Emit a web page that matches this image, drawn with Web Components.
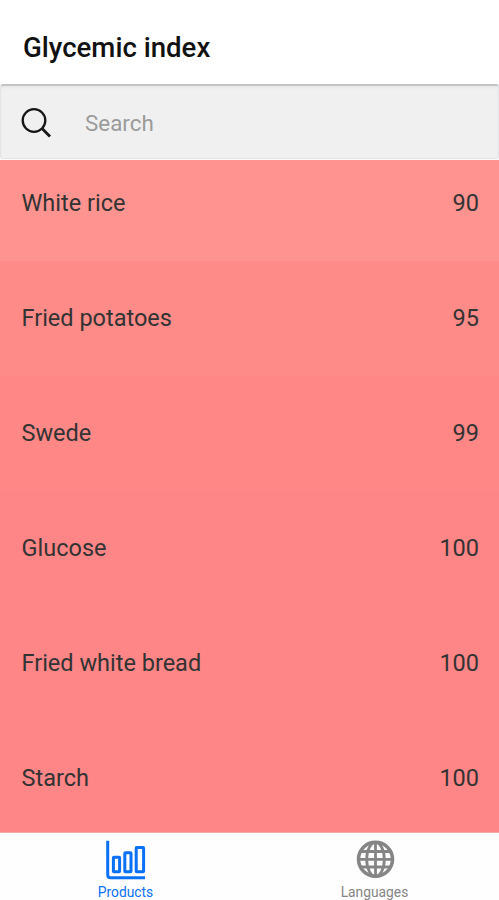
<!DOCTYPE html>
<html lang="en">
<head>
<meta charset="utf-8">
<title>Glycemic index</title>
<style>
  body {
    margin: 0;
    font-family: Roboto, sans-serif;
    background: #fff;
  }
</style>
</head>
<body>
<gi-app></gi-app>

<script>
class GiHeader extends HTMLElement {
  constructor() {
    super();
    this.attachShadow({ mode: "open" });
    this.shadowRoot.innerHTML = `
      <style>
        :host {
          display: flex;
          align-items: center;
          flex: none;
          height: 84px;
          padding: 12px 23px 0;
          box-sizing: border-box;
          background: #fff;
        }
        h1 {
          margin: 0;
          font-size: 27.6px;
          line-height: 32px;
          font-weight: 500;
          color: #111;
        }
      </style>
      <h1><slot></slot></h1>
    `;
  }
}
window.customElements.define("gi-header", GiHeader);

class GiSearch extends HTMLElement {
  constructor() {
    super();
    this.attachShadow({ mode: "open" });
    this.shadowRoot.innerHTML = `
      <style>
        :host {
          display: block;
          flex: none;
          height: 76px;
          background: #fbfbfb;
        }
        .field {
          display: flex;
          align-items: center;
          height: 75px;
          box-sizing: border-box;
          padding: 2px 20px 0;
          border: 1px solid #e2e6e8;
          border-top: 2px solid #c4c4c4;
          border-radius: 3px;
          background: #f0f0f0;
          box-shadow: inset 0 2px 2px #e8e8e8;
        }
        svg {
          display: block;
          width: 32px;
          height: 32px;
          margin-right: 32px;
        }
        span {
          font-size: 22.4px;
          line-height: 30px;
          color: #9b9b9b;
        }
      </style>
      <div class="field">
        <svg viewBox="0 0 32 32" fill="none" stroke="#161616" stroke-width="2.3">
          <circle cx="13" cy="13.5" r="11.3"></circle>
          <path d="M20.8 21.3 29 29.5" stroke-width="2.8"></path>
        </svg>
        <span><slot></slot></span>
      </div>
    `;
  }
}
window.customElements.define("gi-search", GiSearch);

class GiProduct extends HTMLElement {
  constructor() {
    super();
    this.attachShadow({ mode: "open" });
    this.shadowRoot.innerHTML = `
      <style>
        :host {
          display: flex;
          align-items: center;
          justify-content: space-between;
          flex: none;
          height: 115px;
          padding: 0 20px 2px 21.5px;
          box-sizing: border-box;
          background: var(--row, #ff8787);
          color: #333;
          font-size: 23.5px;
          line-height: 30px;
        }
      </style>
      <span><slot></slot></span>
      <span><slot name="value"></slot></span>
    `;
  }
}
window.customElements.define("gi-product", GiProduct);

class GiTab extends HTMLElement {
  constructor() {
    super();
    this.attachShadow({ mode: "open" });
    this.shadowRoot.innerHTML = `
      <style>
        :host {
          display: flex;
          flex: 1;
          flex-direction: column;
          align-items: center;
          padding-top: 7px;
          color: #858585;
          font-size: 13.8px;
          line-height: 16px;
        }
        :host([active]) {
          color: #0a70f5;
        }
        ::slotted(svg) {
          display: block;
          width: 40px;
          height: 40px;
          margin-bottom: 4px;
        }
      </style>
      <slot name="icon"></slot>
      <span><slot></slot></span>
    `;
  }
}
window.customElements.define("gi-tab", GiTab);

class GiApp extends HTMLElement {
  constructor() {
    super();
    this.attachShadow({ mode: "open" });
    this.products = [
      { name: "White rice", value: 90, color: "#ff938f" },
      { name: "Fried potatoes", value: 95, color: "#ff8b88" },
      { name: "Swede", value: 99, color: "#ff8786" },
      { name: "Glucose", value: 100, color: "#ff8686" },
      { name: "Fried white bread", value: 100, color: "#ff8686" },
      { name: "Starch", value: 100, color: "#ff8686" }
    ];
  }
  connectedCallback() {
    let rows = ``;
    this.products.forEach((product) => {
      rows += `
      <gi-product style="--row: ${product.color}">${product.name}<span slot="value">${product.value}</span></gi-product>
      `;
    });
    this.shadowRoot.innerHTML = `
      <style>
        :host {
          display: flex;
          flex-direction: column;
          height: 900px;
          overflow: hidden;
        }
        main {
          flex: 1;
          min-height: 0;
          overflow: hidden;
        }
        /* the list is scrolled a little under the search field */
        .list {
          display: flex;
          flex-direction: column;
          margin-top: -14px;
        }
        nav {
          display: flex;
          flex: none;
          height: 68px;
          padding-left: 1px;
          box-sizing: border-box;
          border-top: 1px solid #f3aaa9;
          background: #fefefe;
        }
      </style>
      <gi-header>Glycemic index</gi-header>
      <gi-search>Search</gi-search>
      <main><div class="list">${rows}</div></main>
      <nav>
        <gi-tab active>
          <svg slot="icon" viewBox="1 0 40 40" fill="none" stroke="currentColor" stroke-width="3" stroke-linejoin="round">
            <path d="M2.7 .8V34.8Q2.7 37.8 5.7 37.8H40"></path>
            <rect x="8.4" y="17.2" width="6.2" height="14.6" rx=".6"></rect>
            <rect x="19.8" y="12.8" width="6.2" height="19" rx=".6"></rect>
            <rect x="31.2" y="7.6" width="7.4" height="24.2" rx=".6"></rect>
          </svg>
          Products
        </gi-tab>
        <gi-tab>
          <svg slot="icon" viewBox="0 0 40 40" fill="none" stroke="currentColor" stroke-width="2.8">
            <circle cx="20.5" cy="19.3" r="17" stroke-width="3.5"></circle>
            <ellipse cx="20.5" cy="19.3" rx="8.8" ry="17"></ellipse>
            <path d="M20.5 2V36M3 19.3H38M6 11.5H35M6 27H35"></path>
          </svg>
          Languages
        </gi-tab>
      </nav>
    `;
  }
}
window.customElements.define("gi-app", GiApp);
</script>
</body>
</html>
